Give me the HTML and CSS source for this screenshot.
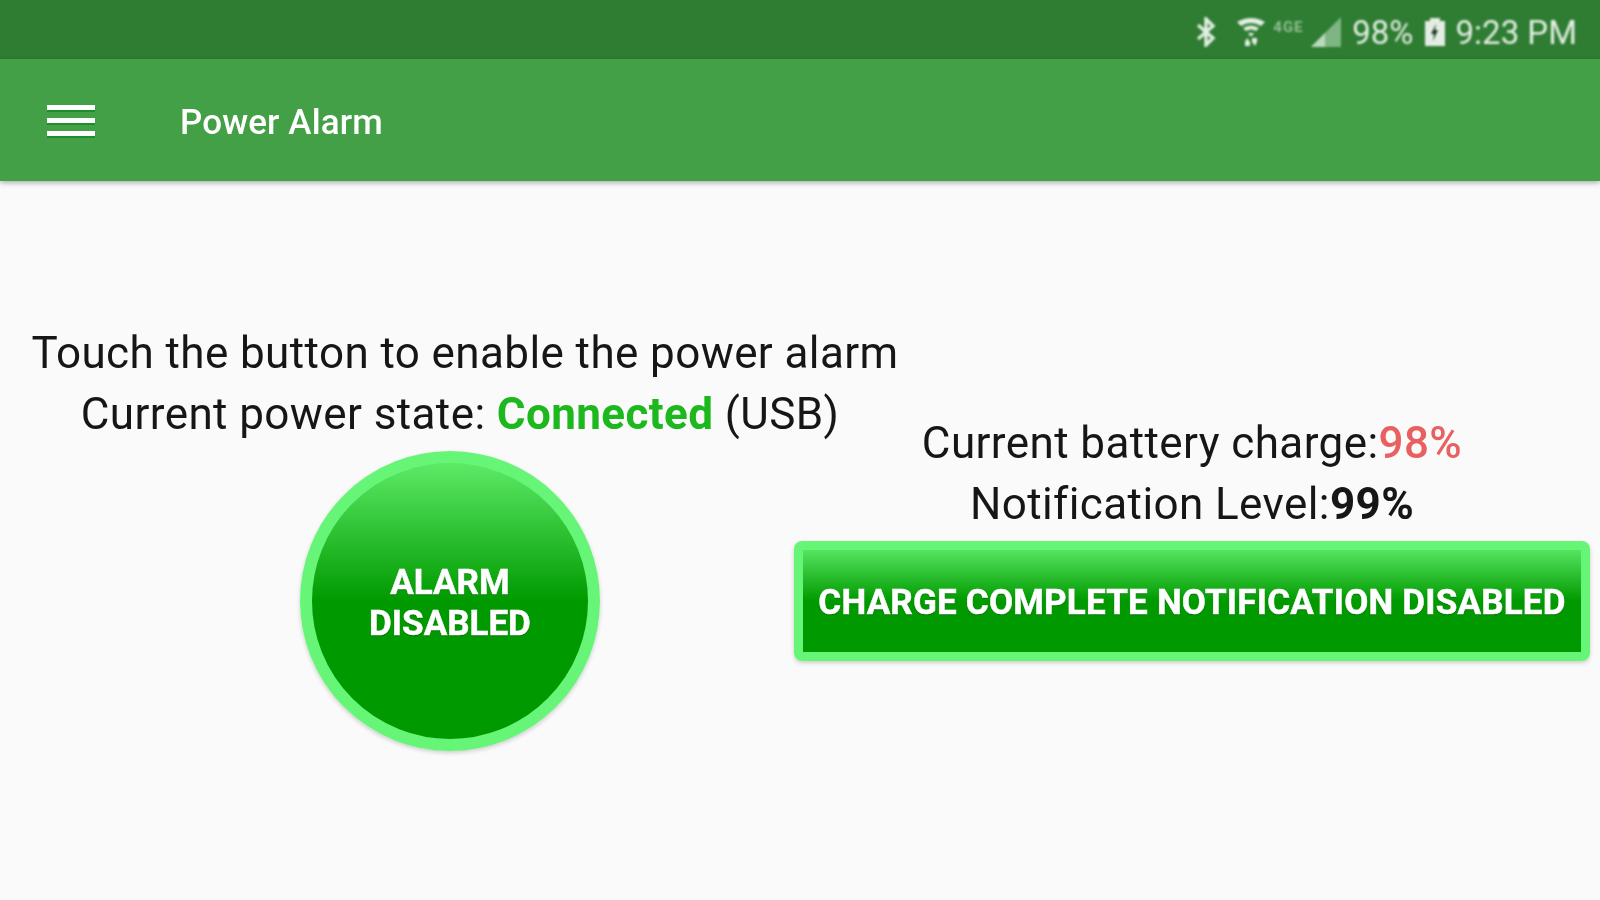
FILE: index.html

```html
<!DOCTYPE html>
<html lang="en">
<head>
  <meta charset="UTF-8" />
  <title>Power Alarm</title>
  <link rel="stylesheet" href="styles.css">
</head>
<body>
  <div class="statusbar">
    <svg class="ic-bt" viewBox="0 0 22 30" width="22" height="30">
      <path d="M3 8 L18 21 L11 28 V2 L18 9 L3 22" fill="none" stroke="#e4eee4" stroke-width="3.4"/>
    </svg>
    <svg class="ic-wifi" viewBox="0 0 28 30" width="28" height="30">
      <path d="M0 5 Q14 -3 28 5 L24 9 Q14 3 4 9 Z M6 11 Q14 6 22 11 L19 14 Q14 11 9 14 Z" fill="#e4eee4"/>
      <path d="M11 16 H17 L15 19 H13 Z" fill="#e4eee4"/>
      <path d="M10 21 L13 25 V29 H8 V25 Z M18 29 L15 25 V21 H20 V25 Z" fill="#e4eee4"/>
    </svg>
    <span class="net">4GE</span>
    <svg class="ic-signal" viewBox="0 0 30 32" width="30" height="32">
      <path d="M0 31 L30 1 V31 Z" fill="#7fb582"/>
      <path d="M0 31 L14 17 V31 Z" fill="#bcd8bd"/>
    </svg>
    <span class="pct">98%</span>
    <svg class="ic-batt" viewBox="0 0 22 30" width="22" height="30">
      <path d="M6 1 H16 V4 H21 V29 H1 V4 H6 Z" fill="#e4ede4"/>
      <path d="M12 7 L7 17 H10 L9 24 L14 13 H11 Z" fill="#1d3a1f"/>
    </svg>
    <span class="clock">9:23 PM</span>
  </div>

  <header class="toolbar">
    <div class="hamburger"><span></span><span></span><span></span></div>
    <div class="title">Power Alarm</div>
  </header>

  <main class="content">
    <section class="col-left">
      <p class="info line-a">Touch the button to enable the power alarm</p>
      <p class="info line-b">Current power state: <b class="connected">Connected</b> (USB)</p>
      <button class="alarm-btn">ALARM<br>DISABLED</button>
    </section>
    <section class="col-right">
      <p class="info">Current battery charge:<span class="charge">98%</span></p>
      <p class="info">Notification Level:<b>99%</b></p>
      <button class="notify-btn">CHARGE COMPLETE NOTIFICATION DISABLED</button>
    </section>
  </main>
</body>
</html>
```

FILE: styles.css

```css
html, body {
  height: 100%;
}
body {
  margin: 0;
  background: #fafafa;
  color: #161616;
  font-family: Roboto, sans-serif;
  display: flex;
  flex-direction: column;
  overflow: hidden;
}
.statusbar {
  height: 59px;
  box-sizing: border-box;
  padding: 5px 23px 0 0;
  background: #2e7d32;
  color: #e4eee4;
  display: flex;
  align-items: center;
  justify-content: flex-end;
  font-size: 33px;
}
.statusbar > * {
  filter: blur(0.8px);
}
.ic-bt { margin-right: 20px; }
.ic-wifi { margin-right: 8px; }
.net {
  font-size: 15px;
  font-weight: 700;
  letter-spacing: 1px;
  color: #8fbf91;
  width: 38px;
  margin-bottom: 10px;
}
.ic-signal { margin-right: 11px; }
.pct { margin-right: 10px; }
.ic-batt { margin-right: 10px; }
.toolbar {
  height: 122px;
  background: #43a047;
  color: #fff;
  display: flex;
  align-items: center;
  padding-left: 47px;
  box-shadow: 0 2px 5px rgba(0, 0, 0, 0.3);
  position: relative;
}
.hamburger {
  width: 48px;
  display: flex;
  flex-direction: column;
  gap: 8px;
  margin-right: 85px;
}
.hamburger span {
  height: 5px;
  background: #fff;
  box-shadow: 0 2px 0 #1b8f2b;
}
.title {
  font-size: 35px;
  font-weight: 500;
  letter-spacing: 0.1px;
  padding-top: 5px;
  filter: blur(0.5px);
}
.content {
  flex: 1;
  display: flex;
  align-items: center;
  padding-bottom: 9px;
}
.col-left {
  flex: 0 0 900px;
  display: flex;
  flex-direction: column;
  align-items: center;
}
.col-right {
  flex: 0 0 796px;
  margin-left: -106px;
  display: flex;
  flex-direction: column;
  align-items: center;
}
.info {
  margin: 1px 0 -1px;
  font-size: 44px;
  letter-spacing: 0.4px;
  line-height: 61px;
  text-align: center;
  white-space: nowrap;
  filter: blur(0.5px);
}
.line-a { margin-left: 30px; }
.line-b { margin-left: 20px; }
.connected {
  color: #1db81d;
  font-weight: 700;
}
.charge {
  color: #e8605f;
  font-weight: 500;
}
.col-right b {
  font-weight: 700;
}
.alarm-btn, .notify-btn {
  font-family: Roboto, sans-serif;
  font-weight: 700;
  color: #fff;
  border: 12px solid #66f577;
  background: linear-gradient(#66f070, #009a00 50%) border-box;
  box-shadow: 0 2px 4px rgba(0, 0, 0, 0.18);
  text-shadow: 0 1px 1px rgba(0, 0, 0, 0.4);
  -webkit-text-stroke: 0.5px #fff;
  padding: 0;
  filter: blur(0.5px);
}
.alarm-btn {
  width: 300px;
  height: 300px;
  border-radius: 50%;
  margin-top: 7px;
  padding-top: 5px;
  font-size: 35px;
  line-height: 41px;
}
.notify-btn {
  width: 796px;
  height: 120px;
  margin-top: 7px;
  padding-top: 4px;
  border-width: 9px;
  border-radius: 8px;
  font-size: 35px;
  letter-spacing: 0.2px;
  white-space: nowrap;
}
```
